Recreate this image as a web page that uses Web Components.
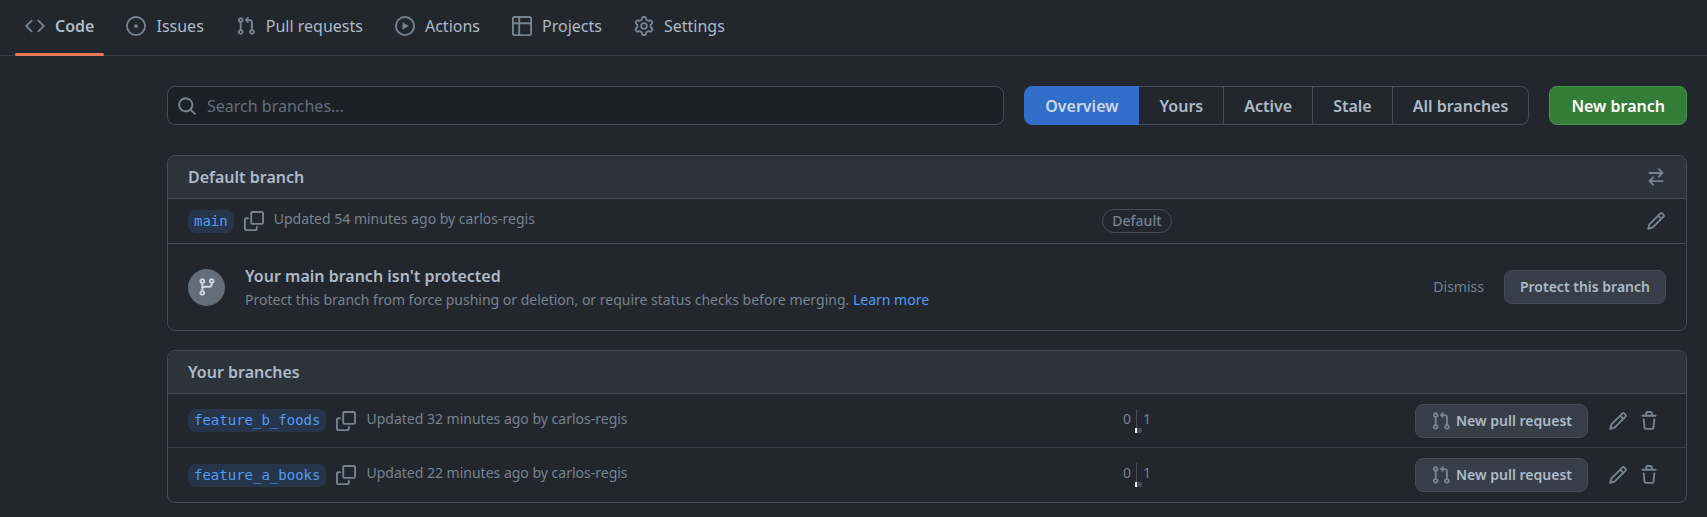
<!DOCTYPE html>
<html lang="en">
<head>
<meta charset="utf-8">
<meta name="viewport" content="width=device-width, initial-scale=1">
<title>Branches</title>
<style>
  :root {
    --bg: #22272e;
    --inset: #1c2128;
    --head: #2d333b;
    --line: #444c56;
    --line-muted: #373e47;
    --text: #adbac7;
    --muted: #768390;
    --link: #539bf5;
    --btn: #373e47;
    --btn-line: #444c56;
  }
  body {
    margin: 0;
    background: var(--bg);
    color: var(--text);
    font: 14px/20px "Noto Sans", sans-serif;
  }
</style>
</head>
<body>
<branches-page></branches-page>

<script>
const ICONS = {
  code: 'M4.72 3.22a.75.75 0 011.06 1.06L2.06 8l3.72 3.72a.75.75 0 11-1.06 1.06L.47 8.53a.75.75 0 010-1.06l4.25-4.25zm6.56 0a.75.75 0 10-1.06 1.06L13.94 8l-3.72 3.72a.75.75 0 101.06 1.06l4.25-4.25a.75.75 0 000-1.06l-4.25-4.25z',
  issue: 'M8 9.5a1.5 1.5 0 100-3 1.5 1.5 0 000 3zM8 0a8 8 0 100 16A8 8 0 008 0zM1.5 8a6.5 6.5 0 1113 0 6.5 6.5 0 01-13 0z',
  pull: 'M7.177 3.073L9.573.677A.25.25 0 0110 .854v4.792a.25.25 0 01-.427.177L7.177 3.427a.25.25 0 010-.354zM3.75 2.5a.75.75 0 100 1.5.75.75 0 000-1.5zm-2.25.75a2.25 2.25 0 113 2.122v5.256a2.251 2.251 0 11-1.5 0V5.372A2.25 2.25 0 011.5 3.25zM11 2.5h-1V4h1a1 1 0 011 1v5.628a2.251 2.251 0 101.5 0V5A2.5 2.5 0 0011 2.5zm1 10.25a.75.75 0 111.5 0 .75.75 0 01-1.5 0zM3.75 12a.75.75 0 100 1.5.75.75 0 000-1.5z',
  play: 'M1.5 8a6.5 6.5 0 1113 0 6.5 6.5 0 01-13 0zM8 0a8 8 0 100 16A8 8 0 008 0zM6.379 5.227A.25.25 0 006 5.442v5.117a.25.25 0 00.379.214l4.264-2.559a.25.25 0 000-.428L6.379 5.227z',
  table: 'M0 1.75C0 .784.784 0 1.75 0h12.5C15.216 0 16 .784 16 1.75v12.5A1.75 1.75 0 0114.25 16H1.75A1.75 1.75 0 010 14.25V1.75zM1.5 6.5v7.75c0 .138.112.25.25.25H5v-8H1.5zM5 5V1.5H1.75a.25.25 0 00-.25.25V5H5zm1.5 1.5v8h7.75a.25.25 0 00.25-.25V6.5h-8zm8-1.5V1.75a.25.25 0 00-.25-.25H6.5V5h8z',
  gear: 'M8 0a8.2 8.2 0 01.701.031C9.444.095 9.99.645 10.16 1.29l.288 1.107c.018.066.079.158.212.224.231.114.454.243.668.386.123.082.233.09.299.071l1.103-.303c.644-.176 1.392.021 1.82.63.27.385.506.792.704 1.218.315.675.111 1.422-.364 1.891l-.814.806c-.049.048-.098.147-.088.294.016.257.016.515 0 .772-.01.147.038.246.088.294l.814.806c.475.469.679 1.216.364 1.891a7.977 7.977 0 01-.704 1.217c-.428.61-1.176.807-1.82.63l-1.102-.302c-.067-.019-.177-.011-.3.071a5.909 5.909 0 01-.668.386c-.133.066-.194.158-.211.224l-.29 1.106c-.168.646-.715 1.196-1.458 1.26a8.006 8.006 0 01-1.402 0c-.743-.064-1.289-.614-1.458-1.26l-.289-1.106c-.018-.066-.079-.158-.212-.224a5.738 5.738 0 01-.668-.386c-.123-.082-.233-.09-.299-.071l-1.103.303c-.644.176-1.392-.021-1.82-.63a8.12 8.12 0 01-.704-1.218c-.315-.675-.111-1.422.363-1.891l.815-.806c.05-.048.098-.147.088-.294a6.214 6.214 0 010-.772c.01-.147-.038-.246-.088-.294l-.815-.806C.635 6.045.431 5.298.746 4.623a7.92 7.92 0 01.704-1.217c.428-.61 1.176-.807 1.82-.63l1.102.302c.067.019.177.011.3-.071.214-.143.437-.272.668-.386.133-.066.194-.158.211-.224l.29-1.106C6.009.645 6.556.095 7.299.03 7.53.01 7.764 0 8 0zm-.571 1.525c-.036.003-.108.036-.137.146l-.289 1.105c-.147.561-.549.967-.998 1.189-.173.086-.34.183-.5.29-.417.278-.97.423-1.529.27l-1.103-.303c-.109-.03-.175.016-.195.045-.22.312-.412.644-.573.99-.014.031-.021.11.059.19l.815.806c.411.406.562.957.53 1.456a4.709 4.709 0 000 .582c.032.499-.119 1.05-.53 1.456l-.815.806c-.081.08-.073.159-.059.19.162.346.353.677.573.989.02.03.085.076.195.046l1.102-.303c.56-.153 1.113-.008 1.53.27.161.107.328.204.501.29.447.222.85.629.997 1.189l.289 1.105c.029.109.101.143.137.146a6.6 6.6 0 001.142 0c.036-.003.108-.036.137-.146l.289-1.105c.147-.561.549-.967.998-1.189.173-.086.34-.183.5-.29.417-.278.97-.423 1.529-.27l1.103.303c.109.029.175-.016.195-.045.22-.313.411-.644.573-.99.014-.031.021-.11-.059-.19l-.815-.806c-.411-.406-.562-.957-.53-1.456a4.709 4.709 0 000-.582c-.032-.499.119-1.05.53-1.456l.815-.806c.081-.08.073-.159.059-.19a6.464 6.464 0 00-.573-.989c-.02-.03-.085-.076-.195-.046l-1.102.303c-.56.153-1.113.008-1.53-.27a4.44 4.44 0 00-.501-.29c-.447-.222-.85-.629-.997-1.189l-.289-1.105c-.029-.11-.101-.143-.137-.146a6.6 6.6 0 00-1.142 0zM11 8a3 3 0 11-6 0 3 3 0 016 0zM9.5 8a1.5 1.5 0 10-3.001.001A1.5 1.5 0 009.5 8z',
  search: 'M11.5 7a4.499 4.499 0 11-8.998 0A4.499 4.499 0 0111.5 7zm-.82 4.74a6 6 0 111.06-1.06l3.04 3.04a.75.75 0 11-1.06 1.06l-3.04-3.04z',
  swap: 'M5.22 14.78a.75.75 0 001.06-1.06L4.56 12h8.69a.75.75 0 000-1.5H4.56l1.72-1.72a.75.75 0 00-1.06-1.06l-3 3a.75.75 0 000 1.06l3 3zm5.56-6.5a.75.75 0 11-1.06-1.06l1.72-1.72H2.75a.75.75 0 010-1.5h8.69L9.72 2.28a.75.75 0 011.06-1.06l3 3a.75.75 0 010 1.06l-3 3z',
  pencil: 'M11.013 1.427a1.75 1.75 0 012.474 0l1.086 1.086a1.75 1.75 0 010 2.474l-8.61 8.61c-.21.21-.47.364-.756.445l-3.251.93a.75.75 0 01-.927-.928l.929-3.25a1.75 1.75 0 01.445-.758l8.61-8.61zm1.414 1.06a.25.25 0 00-.354 0L10.811 3.75l1.439 1.44 1.263-1.263a.25.25 0 000-.354l-1.086-1.086zM11.189 6.25L9.75 4.81l-6.286 6.287a.25.25 0 00-.064.108l-.558 1.953 1.953-.558a.249.249 0 00.108-.064l6.286-6.286z',
  trash: 'M6.5 1.75a.25.25 0 01.25-.25h2.5a.25.25 0 01.25.25V3h-3V1.75zm4.5 0V3h2.25a.75.75 0 010 1.5H2.75a.75.75 0 010-1.5H5V1.75C5 .784 5.784 0 6.75 0h2.5C10.216 0 11 .784 11 1.75zM4.496 6.675a.75.75 0 10-1.492.15l.66 6.6A1.75 1.75 0 005.405 15h5.19c.9 0 1.652-.681 1.741-1.576l.66-6.6a.75.75 0 00-1.492-.149l-.66 6.6a.25.25 0 01-.249.225h-5.19a.25.25 0 01-.249-.225l-.66-6.6z',
  branch: 'M11.75 2.5a.75.75 0 100 1.5.75.75 0 000-1.5zm-2.25.75a2.25 2.25 0 113 2.122V6A2.5 2.5 0 0110 8.5H6a1 1 0 00-1 1v1.128a2.251 2.251 0 11-1.5 0V5.372a2.25 2.25 0 111.5 0v1.836A2.492 2.492 0 016 7h4a1 1 0 001-1v-.628A2.25 2.25 0 019.5 3.25zM4.25 12a.75.75 0 100 1.5.75.75 0 000-1.5zM3.5 3.25a.75.75 0 111.5 0 .75.75 0 01-1.5 0z',
  copy: 'M0 6.75C0 5.784.784 5 1.75 5h1.5a.75.75 0 010 1.5h-1.5a.25.25 0 00-.25.25v7.5c0 .138.112.25.25.25h7.5a.25.25 0 00.25-.25v-1.5a.75.75 0 011.5 0v1.5A1.75 1.75 0 019.25 16h-7.5A1.75 1.75 0 010 14.25v-7.5zM5 1.75C5 .784 5.784 0 6.75 0h7.5C15.216 0 16 .784 16 1.75v7.5A1.75 1.75 0 0114.25 11h-7.5A1.75 1.75 0 015 9.25v-7.5zm1.75-.25a.25.25 0 00-.25.25v7.5c0 .138.112.25.25.25h7.5a.25.25 0 00.25-.25v-7.5a.25.25 0 00-.25-.25h-7.5z'
};

/* Base class: renders the element's html() into an open shadow root. */
class Part extends HTMLElement {
  connectedCallback() {
    if (this.shadowRoot) return;
    this.attachShadow({ mode: 'open' }).innerHTML =
      '<style>*{box-sizing:border-box}' + this.css() + '</style>' + this.html();
  }
  attr(name) { return this.getAttribute(name) || ''; }
}

customElements.define('oct-icon', class extends Part {
  css() { return ':host{display:block;flex:none;width:20px;height:20px;color:var(--muted)}svg{display:block;width:100%;height:100%;fill:currentColor}'; }
  html() { return `<svg viewBox="0 0 16 16" aria-hidden="true"><path fill-rule="evenodd" d="${ICONS[this.attr('name')]}"/></svg>`; }
});

customElements.define('icon-button', class extends Part {
  css() { return ':host{display:block;flex:none}button{display:block;padding:0;border:0;background:none;cursor:pointer}'; }
  html() { return `<button type="button" aria-label="${this.attr('label')}"><oct-icon name="${this.attr('icon')}"></oct-icon></button>`; }
});

customElements.define('nav-tab', class extends Part {
  css() { return `
    :host{display:block;position:relative}
    a{display:flex;align-items:center;gap:10px;padding:14px 10px 17px;font-size:16px;line-height:24px;color:var(--text);text-decoration:none;white-space:nowrap}
    :host([current]) a{font-weight:600}
    :host([current])::after{content:"";position:absolute;left:0;right:0;bottom:-1px;height:3px;border-radius:3px;background:#ec775c}`; }
  html() { return `<a href="#"${this.hasAttribute('current') ? ' aria-current="page"' : ''}><oct-icon name="${this.attr('icon')}"></oct-icon><slot></slot></a>`; }
});

customElements.define('repo-nav', class extends Part {
  css() { return ':host{display:block;border-bottom:1px solid var(--line-muted)}nav{display:flex;gap:12px;padding:0 15px}'; }
  html() { return '<nav aria-label="Repository"><slot></slot></nav>'; }
});

customElements.define('search-box', class extends Part {
  css() { return `
    :host{display:block;flex:1;min-width:0}
    label{display:flex;align-items:center;gap:10px;height:39px;padding:0 9px;border:1px solid var(--line);border-radius:8px;background:var(--inset)}
    input{flex:1;min-width:0;padding:1px 0 0;border:0;outline:0;background:none;color:var(--text);font:inherit;font-size:16px;line-height:24px}
    input::placeholder{color:#636e7b;opacity:1}`; }
  html() { return `<label><oct-icon name="search"></oct-icon><input type="text" aria-label="Search branches" placeholder="${this.attr('placeholder')}"></label>`; }
});

customElements.define('segment-link', class extends Part {
  css() { return `
    :host{display:block;margin-left:-1px}
    a{display:block;padding:7px 20px 6px;border:1px solid var(--line);font-size:16px;line-height:24px;font-weight:600;color:var(--text);text-decoration:none;white-space:nowrap}
    :host(:first-child){margin-left:0}
    :host(:first-child) a{border-radius:8px 0 0 8px}
    :host(:last-child) a{border-radius:0 8px 8px 0}
    :host([current]){position:relative}
    :host([current]) a{background:#316dca;border-color:#316dca;color:#cdd9e5}`; }
  html() { return `<a href="#"${this.hasAttribute('current') ? ' aria-current="page"' : ''}><slot></slot></a>`; }
});

customElements.define('segment-group', class extends Part {
  css() { return ':host{display:block;flex:none}nav{display:flex}'; }
  html() { return '<nav aria-label="Branch filters"><slot></slot></nav>'; }
});

customElements.define('ui-button', class extends Part {
  css() { return `
    :host{display:block;flex:none}
    button{display:flex;align-items:center;gap:5px;height:34px;padding:0 15px;border:1px solid var(--btn-line);border-radius:8px;background:var(--btn);color:var(--text);font:inherit;font-weight:600;white-space:nowrap;cursor:pointer}
    :host([kind=primary]) button{height:39px;padding:1px 21px 0;background:#347d39;border-color:#46954a;color:#fff;font-size:16px}`; }
  html() { return `<button type="button"><slot></slot></button>`; }
});

customElements.define('branch-card', class extends Part {
  css() { return `
    :host{display:block;border:1px solid var(--line);border-radius:8px;overflow:hidden}
    header{display:flex;align-items:center;justify-content:space-between;height:43px;padding:0 20px;background:var(--head);border-bottom:1px solid var(--line)}
    h2{margin:0;font-size:16px;line-height:24px;font-weight:600}`; }
  html() { return `<section><header><h2>${this.attr('heading')}</h2><slot name="action"></slot></header><slot></slot></section>`; }
});

customElements.define('branch-row', class extends Part {
  css() { return `
    :host{display:grid;grid-template-columns:minmax(0,37fr) 70px minmax(0,20fr);align-items:center;height:54px;padding:0 20px}
    :host([compact]){height:45px}
    :host(:not(:last-child)){border-bottom:1px solid var(--line-muted)}
    :host([compact]:not(:last-child)){border-color:var(--line)}
    .name{display:flex;align-items:center;gap:10px;white-space:nowrap}
    .tag{padding:1px 6px;border-radius:8px;background:rgba(65,132,228,.15);color:var(--link);font:14px/21px "DejaVu Sans Mono",monospace;text-decoration:none}
    .meta{color:var(--muted);padding-bottom:4px}
    .mid{display:flex;justify-content:center}
    .actions{display:flex;align-items:center;justify-content:flex-end;gap:11px}
    ::slotted(ui-button){margin-right:9px}
    :host([deletable]) .actions{padding-right:7px}`; }
  html() { return `
    <div class="name"><a class="tag" href="#">${this.attr('name')}</a><icon-button icon="copy" label="Copy branch name"></icon-button><span class="meta"><slot></slot></span></div>
    <div class="mid"><slot name="status"></slot></div>
    <div class="actions"><slot name="actions"></slot></div>`; }
});

customElements.define('state-label', class extends Part {
  css() { return ':host{display:block;padding:0 9px;border:1px solid var(--line);border-radius:12px;line-height:22px;color:var(--muted);font-weight:500}'; }
  html() { return '<slot></slot>'; }
});

/* Commits behind / ahead of the default branch, with small bars underneath. */
customElements.define('ahead-behind', class extends Part {
  css() { return `
    :host{display:grid;grid-template-columns:1fr 1fr;width:70px;color:var(--muted);line-height:19px}
    span{padding:0 6px}
    .behind{padding:0 5px;text-align:right;border-right:1px solid var(--line)}
    .bars{grid-column:1 / -1;display:flex;justify-content:center;height:5px;padding-left:3px}
    i{width:2px;background:#e6edf3}
    i+i{width:5px;background:var(--line);border-radius:0 2px 2px 0}`; }
  html() { return `<span class="behind">${this.attr('behind')}</span><span>${this.attr('ahead')}</span><div class="bars"><i></i><i></i></div>`; }
});

customElements.define('protect-notice', class extends Part {
  css() { return `
    :host{display:flex;align-items:center;gap:20px;padding:20px}
    .badge{display:grid;place-items:center;flex:none;width:37px;height:37px;border-radius:50%;background:#636e7b}
    .badge oct-icon{color:#cdd9e5}
    .copy{flex:1;min-width:0}
    h3{margin:0;font-size:16px;line-height:24px;font-weight:600}
    p{margin:0;padding-top:2px;color:var(--muted)}
    a{color:var(--link);text-decoration:none}
    .dismiss{padding:0;border:0;background:none;color:var(--muted);font:inherit;cursor:pointer}`; }
  html() { return `
    <div class="badge"><oct-icon name="branch"></oct-icon></div>
    <div class="copy"><h3>Your main branch isn't protected</h3>
    <p>Protect this branch from force pushing or deletion, or require status checks before merging. <a href="#">Learn more</a></p></div>
    <button class="dismiss" type="button">Dismiss</button>
    <ui-button>Protect this branch</ui-button>`; }
});

customElements.define('branches-page', class extends Part {
  css() { return `
    :host{display:block}
    main{display:flex;flex-direction:column;padding:30px 20px 12px 167px}
    .toolbar{display:flex;gap:20px;margin-bottom:30px}
    branch-card+branch-card{margin-top:19px}`; }
  html() {
    const row = (name, mins) => `
      <branch-row name="${name}" deletable>Updated ${mins} minutes ago by carlos-regis
        <ahead-behind slot="status" behind="0" ahead="1"></ahead-behind>
        <ui-button slot="actions"><oct-icon name="pull"></oct-icon>New pull request</ui-button>
        <icon-button slot="actions" icon="pencil" label="Rename branch"></icon-button>
        <icon-button slot="actions" icon="trash" label="Delete branch"></icon-button>
      </branch-row>`;
    return `
    <repo-nav>
      <nav-tab icon="code" current>Code</nav-tab>
      <nav-tab icon="issue">Issues</nav-tab>
      <nav-tab icon="pull">Pull requests</nav-tab>
      <nav-tab icon="play">Actions</nav-tab>
      <nav-tab icon="table">Projects</nav-tab>
      <nav-tab icon="gear">Settings</nav-tab>
    </repo-nav>
    <main>
      <div class="toolbar">
        <search-box placeholder="Search branches..."></search-box>
        <segment-group>
          <segment-link current>Overview</segment-link>
          <segment-link>Yours</segment-link>
          <segment-link>Active</segment-link>
          <segment-link>Stale</segment-link>
          <segment-link>All branches</segment-link>
        </segment-group>
        <ui-button kind="primary">New branch</ui-button>
      </div>
      <branch-card heading="Default branch">
        <icon-button slot="action" icon="swap" label="Switch default branch"></icon-button>
        <branch-row name="main" compact>Updated 54 minutes ago by carlos-regis
          <state-label slot="status">Default</state-label>
          <icon-button slot="actions" icon="pencil" label="Rename branch"></icon-button>
        </branch-row>
        <protect-notice></protect-notice>
      </branch-card>
      <branch-card heading="Your branches">${row('feature_b_foods', 32)}${row('feature_a_books', 22)}
      </branch-card>
    </main>`;
  }
});
</script>
</body>
</html>
